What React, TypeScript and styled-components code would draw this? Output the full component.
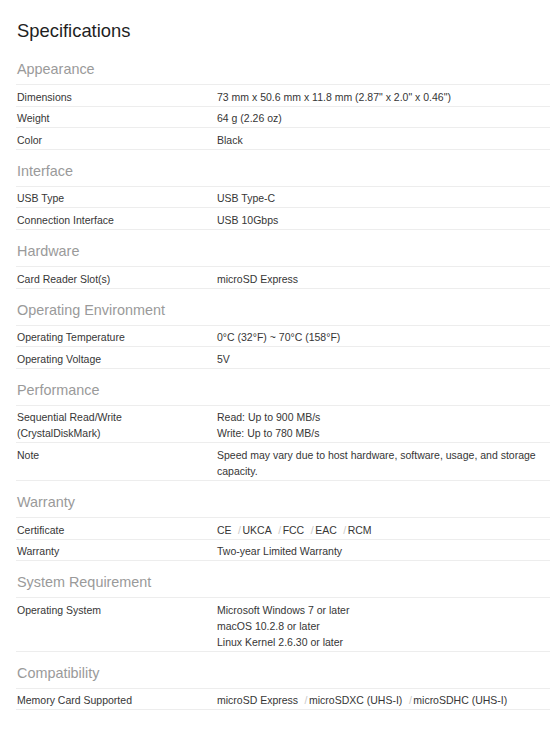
import React from "react";
import styled, { createGlobalStyle } from "styled-components";

const GlobalStyle = createGlobalStyle`
  html, body {
    margin: 0;
    padding: 0;
    background: #ffffff;
  }
  body {
    font-family: "Liberation Sans", Arial, Helvetica, sans-serif;
    -webkit-font-smoothing: antialiased;
  }
`;

const Page = styled.main`
  padding: 19px 0 0 16px;
  color: #363636;
`;

const Title = styled.h1`
  margin: 0 0 5px 1px;
  font-size: 18.4px;
  line-height: 24px;
  font-weight: 400;
  color: #1f1f1f;
`;

const Section = styled.section`
  display: flex;
  flex-direction: column;
`;

const Heading = styled.h2`
  margin: 11px 0 5px 1px;
  font-size: 14.4px;
  line-height: 20px;
  font-weight: 400;
  color: #9a9a9a;
`;

const Table = styled.dl`
  margin: 0;
  display: flex;
  flex-direction: column;
  border-bottom: 1px solid #ededed;
`;

const Row = styled.div`
  display: grid;
  grid-template-columns: 200px 1fr;
  border-top: 1px solid #ededed;
`;

const Label = styled.dt`
  margin: 0;
  padding: 3.6px 0 1px 1px;
  font-size: 10.5px;
  line-height: 16px;
  color: #363636;
`;

const Value = styled.dd`
  margin: 0;
  padding: 3.6px 8px 1px 1px;
  font-size: 10.5px;
  line-height: 16px;
  color: #363636;
`;

const Line = styled.span`
  display: block;
`;

const InlineList = styled.ul`
  margin: 0;
  padding: 0;
  list-style: none;
  display: flex;
  flex-wrap: wrap;
`;

const InlineItem = styled.li`
  & + &::before {
    content: "/";
    margin: 0 1.5px 0 6.5px;
    color: #c8c8c8;
  }
`;

type Spec = { label: string[]; value: string[]; list?: boolean };
type Group = { title: string; specs: Spec[] };

const groups: Group[] = [
  {
    title: "Appearance",
    specs: [
      {
        label: ["Dimensions"],
        value: ['73 mm x 50.6 mm x 11.8 mm (2.87" x 2.0" x 0.46")'],
      },
      { label: ["Weight"], value: ["64 g (2.26 oz)"] },
      { label: ["Color"], value: ["Black"] },
    ],
  },
  {
    title: "Interface",
    specs: [
      { label: ["USB Type"], value: ["USB Type-C"] },
      { label: ["Connection Interface"], value: ["USB 10Gbps"] },
    ],
  },
  {
    title: "Hardware",
    specs: [{ label: ["Card Reader Slot(s)"], value: ["microSD Express"] }],
  },
  {
    title: "Operating Environment",
    specs: [
      {
        label: ["Operating Temperature"],
        value: ["0°C (32°F) ~ 70°C (158°F)"],
      },
      { label: ["Operating Voltage"], value: ["5V"] },
    ],
  },
  {
    title: "Performance",
    specs: [
      {
        label: ["Sequential Read/Write", "(CrystalDiskMark)"],
        value: ["Read: Up to 900 MB/s", "Write: Up to 780 MB/s"],
      },
      {
        label: ["Note"],
        value: [
          "Speed may vary due to host hardware, software, usage, and storage capacity.",
        ],
      },
    ],
  },
  {
    title: "Warranty",
    specs: [
      {
        label: ["Certificate"],
        value: ["CE", "UKCA", "FCC", "EAC", "RCM"],
        list: true,
      },
      { label: ["Warranty"], value: ["Two-year Limited Warranty"] },
    ],
  },
  {
    title: "System Requirement",
    specs: [
      {
        label: ["Operating System"],
        value: [
          "Microsoft Windows 7 or later",
          "macOS 10.2.8 or later",
          "Linux Kernel 2.6.30 or later",
        ],
      },
    ],
  },
  {
    title: "Compatibility",
    specs: [
      {
        label: ["Memory Card Supported"],
        value: ["microSD Express", "microSDXC (UHS-I)", "microSDHC (UHS-I)"],
        list: true,
      },
    ],
  },
];

export default function App() {
  return (
    <>
      <GlobalStyle />
      <Page>
        <Title>Specifications</Title>
        {groups.map((g) => (
          <Section key={g.title}>
            <Heading>{g.title}</Heading>
            <Table>
              {g.specs.map((s) => (
                <Row key={s.label.join(" ")}>
                  <Label>
                    {s.label.map((l) => (
                      <Line key={l}>{l}</Line>
                    ))}
                  </Label>
                  <Value>
                    {s.list ? (
                      <InlineList>
                        {s.value.map((v) => (
                          <InlineItem key={v}>{v}</InlineItem>
                        ))}
                      </InlineList>
                    ) : (
                      s.value.map((v) => <Line key={v}>{v}</Line>)
                    )}
                  </Value>
                </Row>
              ))}
            </Table>
          </Section>
        ))}
      </Page>
    </>
  );
}
